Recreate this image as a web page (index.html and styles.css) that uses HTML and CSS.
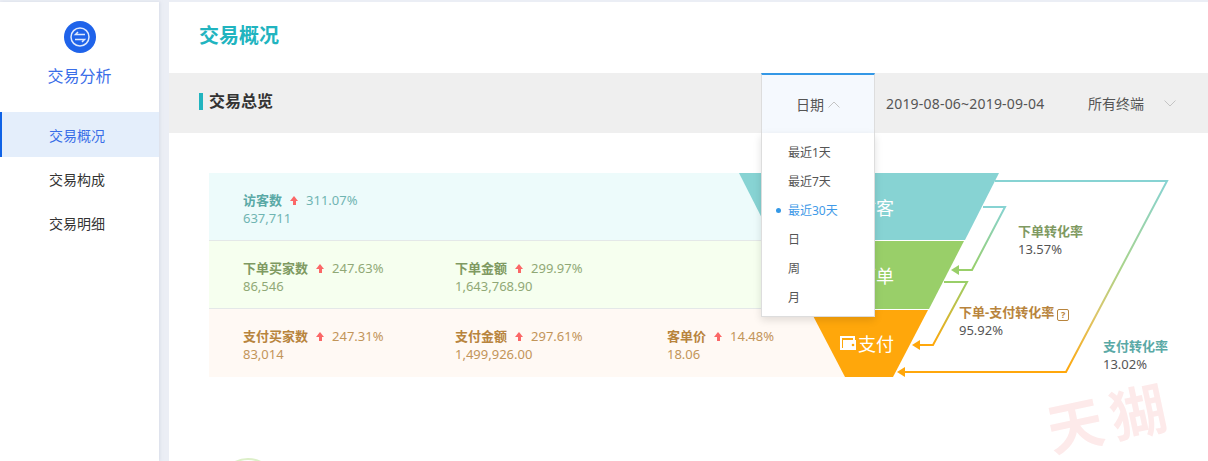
FILE: index.html
```html
<!DOCTYPE html>
<html lang="zh">
<head>
<meta charset="utf-8">
<title>交易概况</title>
<link rel="stylesheet" href="styles.css">
</head>
<body>
<div class="app">
  <aside class="sidebar">
    <div class="brand">
      <svg class="brand-icon" viewBox="0 0 32 32" width="32" height="32">
        <circle cx="16" cy="16" r="16" fill="#1f63ea"/>
        <circle cx="16" cy="16" r="9" fill="none" stroke="#dfe9fd" stroke-width="1.5"/>
        <path d="M21 13.500H11.500L14 11M11 18.500H20.500L18 21" fill="none" stroke="#dfe9fd" stroke-width="1.5"/>
      </svg>
      <div class="brand-name">交易分析</div>
    </div>
    <nav class="nav">
      <a class="nav-item active">交易概况</a>
      <a class="nav-item">交易构成</a>
      <a class="nav-item">交易明细</a>
    </nav>
  </aside>
  <main class="main">
    <header class="page-head"><h1>交易概况</h1></header>
    <section class="band">
      <h2>交易总览</h2>
      <div class="filters">
        <div class="date-tab">日期
          <svg class="caret" viewBox="0 0 12 7" width="12" height="7"><path d="M.5 6.500 6 1l5.500 5.500" fill="none" stroke="#c4c4c4"/></svg>
          <ul class="menu">
            <li>最近1天</li>
            <li>最近7天</li>
            <li class="selected">最近30天</li>
            <li>日</li>
            <li>周</li>
            <li>月</li>
          </ul>
        </div>
        <div class="range">2019-08-06~2019-09-04</div>
        <div class="terminal">所有终端
          <svg class="caret" viewBox="0 0 12 7" width="12" height="7"><path d="M.5.5 6 6l5.500-5.500" fill="none" stroke="#c4c4c4"/></svg>
        </div>
      </div>
    </section>
    <section class="overview">
      <div class="rows">
        <div class="row visit">
          <div class="metric"><div class="line"><b>访客数</b><i class="up"></i><span>311.07%</span></div><div class="val">637,711</div></div>
        </div>
        <div class="row order">
          <div class="metric"><div class="line"><b>下单买家数</b><i class="up"></i><span>247.63%</span></div><div class="val">86,546</div></div>
          <div class="metric"><div class="line"><b>下单金额</b><i class="up"></i><span>299.97%</span></div><div class="val">1,643,768.90</div></div>
        </div>
        <div class="row pay">
          <div class="metric"><div class="line"><b>支付买家数</b><i class="up"></i><span>247.31%</span></div><div class="val">83,014</div></div>
          <div class="metric"><div class="line"><b>支付金额</b><i class="up"></i><span>297.61%</span></div><div class="val">1,499,926.00</div></div>
          <div class="metric"><div class="line"><b>客单价</b><i class="up"></i><span>14.48%</span></div><div class="val">18.06</div></div>
        </div>
      </div>
      <svg class="funnel" viewBox="0 0 480 230" width="480" height="230">
        <defs>
          <linearGradient id="gOuter" gradientUnits="userSpaceOnUse" x1="0" y1="8" x2="0" y2="199"><stop offset="0" stop-color="#87d3d3"/><stop offset=".45" stop-color="#a9d48c"/><stop offset=".7" stop-color="#dcc66a"/><stop offset="1" stop-color="#ffa70b"/></linearGradient>
          <linearGradient id="gOne" gradientUnits="userSpaceOnUse" x1="0" y1="34" x2="0" y2="97"><stop offset="0" stop-color="#87d3d3"/><stop offset="1" stop-color="#99cf69"/></linearGradient>
          <linearGradient id="gTwo" gradientUnits="userSpaceOnUse" x1="0" y1="109" x2="0" y2="172"><stop offset="0" stop-color="#99cf69"/><stop offset="1" stop-color="#ffa70b"/></linearGradient>
        </defs>
        <polygon points="10,0 270,0 236,67 44,67" fill="#87d3d3"/>
        <polygon points="45,68 235,68 200,136 80,136" fill="#99cf69"/>
        <polygon points="81,137 199,137 164,204 116,204" fill="#ffa70b"/>
        <path d="M266 8H438L337 199H172" fill="none" stroke="url(#gOuter)" stroke-width="2"/>
        <path d="M168 199 176 194V204Z" fill="#ffa70b"/>
        <path d="M254 34H276L243 97H226" fill="none" stroke="url(#gOne)" stroke-width="2"/>
        <path d="M222 97 230 92V102Z" fill="#99cf69"/>
        <path d="M215 109H238L204 172H187" fill="none" stroke="url(#gTwo)" stroke-width="2"/>
        <path d="M183 172 191 167V177Z" fill="#ffa70b"/>
        <path d="M111 163H126V177H111Z" fill="#fff"/>
        <path d="M113 165H124V175H113Z" fill="#ffa70b"/>
        <path d="M114 167H127V177H114Z" fill="#fff"/>
        <circle cx="124" cy="172" r="1.300" fill="#ffa70b"/>
      </svg>
      <div class="stage stage-visit">访客</div>
      <div class="stage stage-order">下单</div>
      <div class="stage stage-pay">支付</div>
      <div class="rate rate-order"><b>下单转化率</b><div>13.57%</div></div>
      <div class="rate rate-step"><b>下单-支付转化率<span class="help">?</span></b><div>95.92%</div></div>
      <div class="rate rate-pay"><b>支付转化率</b><div>13.02%</div></div>
      <div class="ring"></div>
      <div class="watermark"><span class="wm-a">天</span><span class="wm-b">猢</span></div>
    </section>
  </main>
</div>
</body>
</html>
```
FILE: styles.css
```css
* { box-sizing: border-box; }
html, body { margin: 0; height: 100%; }
body {
  background: #ebeef5;
  font-family: "Noto Sans", "Noto Sans CJK SC", sans-serif;
  color: #333;
  overflow: hidden;
}
.app { display: flex; height: 461px; padding-top: 2px; gap: 10px; }

.sidebar { width: 159px; flex: none; background: #fff; box-shadow: 1px 0 3px rgba(180,190,210,.35); }
.brand { height: 110px; display: flex; flex-direction: column; align-items: center; padding-top: 19px; }
.brand-icon { display: block; }
.brand-name { margin-top: 13px; font-size: 16px; line-height: 20px; color: #3a6ee8; }
.nav { display: flex; flex-direction: column; }
.nav-item { height: 44px; line-height: 46px; padding-left: 49px; font-size: 14px; color: #333; }
.nav-item.active { height: 45px; line-height: 47px; background: #e4eefb; color: #3a6ee8; padding-left: 47px; border-left: 2px solid #0f62e6; }

.main { flex: 1; min-width: 0; background: #fff; display: flex; flex-direction: column; }
.page-head { height: 71px; padding: 20px 30px 0; }
.page-head h1 { margin: 0; font-size: 20px; line-height: 28px; font-weight: 700; color: #21b4bf; }

.band { height: 60px; background: #efefef; display: flex; align-items: center; justify-content: space-between; padding-left: 30px; }
.band h2 { margin: 0 0 3px; padding-left: 6px; border-left: 4px solid #21b4bf; font-size: 16px; line-height: 17px; font-weight: 700; color: #333; }
.filters { display: flex; align-items: center; height: 100%; font-size: 14px; color: #555; }
.date-tab {
  position: relative; width: 114px; height: 100%;
  display: flex; align-items: center; justify-content: center; gap: 4px;
  background: #f5f9fe; border-top: 2px solid #3498e6;
  border-left: 1px solid #ddd; border-right: 1px solid #ddd;
}
.caret { display: block; }
.date-tab .caret { margin-top: 1px; }
.menu {
  position: absolute; left: -1px; top: 58px; width: 114px; height: 184px; margin: 0; padding: 5px 0 0 26px; list-style: none;
  background: #fff; border: 1px solid #ddd; border-top: 0; box-shadow: 0 3px 8px rgba(0,0,0,.12); z-index: 3; font-size: 12px;
}
.menu li { position: relative; height: 29px; line-height: 29px; color: #555; }
.menu li.selected { color: #3f9ae8; }
.menu li.selected::before { content: ""; position: absolute; left: -12px; top: 12px; width: 5px; height: 5px; border-radius: 50%; background: #3498e6; }
.range { margin-left: 11px; width: 202px; font-size: 14px; letter-spacing: .2px; }
.terminal { width: 120px; display: flex; align-items: center; gap: 20px; }

.overview { position: relative; flex: 1; min-height: 0; padding: 40px 40px 0; overflow: hidden; }
.rows { display: flex; flex-direction: column; width: 636px; }
.row { height: 68px; display: flex; padding: 18px 0 0 34px; border-bottom: 1px solid #e4e8e8; }
.row.pay { border-bottom: 0; }
.visit { background: #edfbfb; color: #5aa9a6; }
.order { background: #f6ffef; color: #7f9a62; }
.pay { background: #fff9f4; color: #b8843d; }
.metric { flex: none; width: 212px; font-size: 13px; line-height: 18px; }
.line { display: flex; align-items: center; white-space: nowrap; }
.line b { font-weight: 700; }
.line span { opacity: .85; }
.val { opacity: .85; }
.up { position: relative; display: block; width: 9px; height: 9px; margin: 0 7px 0 8px; }
.up::before { content: ""; position: absolute; left: 0; top: 0; border: 4.5px solid transparent; border-top: 0; border-bottom: 5px solid #fb6767; }
.up::after { content: ""; position: absolute; left: 3px; top: 4px; width: 3px; height: 5px; background: #fb6767; }

.funnel { position: absolute; left: 560px; top: 40px; }
.stage { position: absolute; width: 40px; text-align: center; font-size: 18px; line-height: 24px; color: #fff; }
.stage-visit { left: 687px; top: 63px; }
.stage-order { left: 687px; top: 131px; }
.stage-pay { left: 687px; top: 199px; }

.rate { position: absolute; font-size: 13px; line-height: 18px; color: #555; white-space: nowrap; }
.rate b { display: block; font-weight: 700; }
.rate-order { left: 849px; top: 89px; }
.rate-order b { color: #7f9a62; }
.rate-step { left: 790px; top: 170px; }
.rate-step b { color: #b8843d; }
.rate-pay { left: 934px; top: 204px; }
.rate-pay b { color: #5aa9a6; }
.help { display: inline-block; width: 12px; height: 12px; margin-left: 3px; border: 1px solid #b8843d; border-radius: 2px; font-size: 9px; line-height: 10px; text-align: center; vertical-align: -1px; }

.ring { position: absolute; left: 50px; top: 325px; width: 58px; height: 58px; border-radius: 50%; border: 2px solid #dcefc8; }
.watermark { position: absolute; left: 877px; top: 255px; display: flex; gap: 8px; font-size: 56px; line-height: 56px; font-weight: 700; color: #fdeaea; transform: rotate(-12deg); font-family: "Noto Sans CJK SC", sans-serif; }
```
